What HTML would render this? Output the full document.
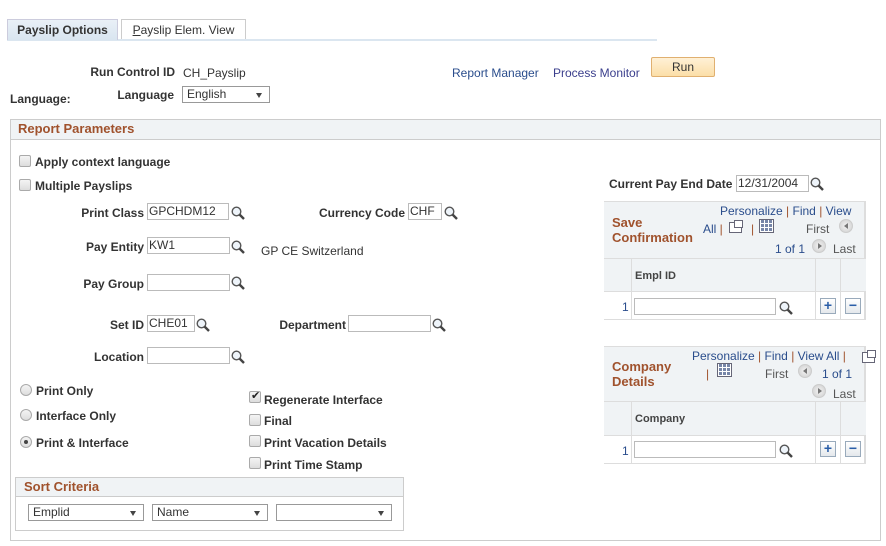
<!DOCTYPE html>
<html><head><meta charset="utf-8"><style>
*{box-sizing:border-box;margin:0;padding:0}
body{width:886px;height:546px;background:#fff;font-family:"Liberation Sans",Arial,sans-serif;font-size:12px;color:#333;position:relative;overflow:hidden}
.a{position:absolute;white-space:nowrap}
.b{font-weight:bold}
.r{text-align:right}
.lnk{color:#2a4d8c}
.h{color:#a0522d;font-weight:bold;font-size:13px}
.in{position:absolute;height:17px;border:1px solid #bbb;background:#fff;font-size:12px;padding-left:1px;line-height:14px;color:#333}
.sel{position:absolute;height:17px;border:1px solid #999;background:#fff;padding-left:4px;line-height:15px}
.sel:after{content:"";position:absolute;right:7px;top:6px;border-left:3px solid transparent;border-right:3px solid transparent;border-top:5px solid #444}
.cb{position:absolute;width:12px;height:12px;border:1px solid #aaa;border-radius:2px;background:linear-gradient(#f4f4f4,#ddd)}
.rd{position:absolute;width:12px;height:12px;border:1px solid #aaa;border-radius:50%;background:linear-gradient(#f4f4f4,#ddd)}
.mag{position:absolute;width:14px;height:14px}
.gb{position:absolute;width:16px;height:16px;border:1px solid #9ab;background:linear-gradient(#fff,#e4e8ec);color:#2a5ea8;font-weight:bold;text-align:center;line-height:13px;font-size:14px}
.nav{position:absolute;width:14px;height:14px;border-radius:50%;background:radial-gradient(#f4f4f4,#ccc);border:1px solid #ccc}
.nav:after{content:"";position:absolute;top:3px;border-top:3px solid transparent;border-bottom:3px solid transparent}
.nl:after{left:4px;border-right:4px solid #777}
.nr:after{left:5px;border-left:4px solid #777}
.gi{position:absolute;width:15px;height:14px;background:repeating-linear-gradient(90deg,#fff 0 1px,transparent 1px 4px),repeating-linear-gradient(0deg,#fff 0 1px,#7786a8 1px 4px);border:1px solid #667}
.ex{position:absolute;width:13px;height:11px;border:1px solid #667;background:#fff}
.ex:after{content:"";position:absolute;left:4px;top:-3px;width:7px;height:6px;border:1px solid #667;background:#fff}
</style></head><body>
<svg width="0" height="0" style="position:absolute"><defs><symbol id="m" viewBox="0 0 14 14"><circle cx="5.5" cy="5.5" r="4.3" fill="#eef4fa" stroke="#555" stroke-width="1.4"/><path d="M8.5 8.5 L13 13" stroke="#444" stroke-width="2.4"/></symbol></defs></svg>

<div class="a" style="left:7px;top:39px;width:650px;height:2px;background:#dbe6f0"></div>
<div class="a b" style="left:7px;top:19px;width:111px;height:21px;background:linear-gradient(#e9f0f7,#d9e5f0);border:1px solid #ccd;border-bottom:none;text-align:center;line-height:20px">Payslip Options</div>
<div class="a" style="left:121px;top:19px;width:125px;height:20px;background:#fff;border:1px solid #ccc;border-bottom:none;text-align:center;line-height:20px"><u>P</u>ayslip Elem. View</div>

<div class="a b r" style="left:60px;top:65px;width:115px">Run Control ID</div>
<div class="a" style="left:183px;top:66px">CH_Payslip</div>
<div class="a b" style="left:10px;top:92px">Language:</div>
<div class="a b r" style="left:60px;top:88px;width:114px">Language</div>
<div class="sel" style="left:182px;top:86px;width:88px">English</div>
<div class="a lnk" style="left:452px;top:66px">Report Manager</div>
<div class="a lnk" style="left:553px;top:66px;color:#3a3e8c">Process Monitor</div>
<div class="a" style="left:651px;top:57px;width:64px;height:20px;border:1px solid #e0b070;border-radius:2px;background:linear-gradient(#fff1d6,#fbdfa8);text-align:center;line-height:18px">Run</div>

<div class="a" style="left:10px;top:119px;width:871px;height:422px;border:1px solid #ccc"></div>
<div class="a" style="left:11px;top:120px;width:869px;height:20px;background:#f0f3f5;border-bottom:1px solid #ccc"></div>
<div class="a h" style="left:18px;top:121px">Report Parameters</div>

<div class="cb" style="left:19px;top:155px"></div><div class="a b" style="left:35px;top:155px">Apply context language</div>
<div class="cb" style="left:19px;top:179px"></div><div class="a b" style="left:35px;top:179px">Multiple Payslips</div>

<div class="a b r" style="left:40px;top:206px;width:104px">Print Class</div>
<div class="in" style="left:147px;top:203px;width:82px">GPCHDM12</div>
<svg class="mag" style="left:231px;top:206px"><use href="#m"/></svg>
<div class="a b r" style="left:280px;top:206px;width:125px">Currency Code</div>
<div class="in" style="left:408px;top:203px;width:34px">CHF</div>
<svg class="mag" style="left:444px;top:206px"><use href="#m"/></svg>

<div class="a b r" style="left:40px;top:240px;width:104px">Pay Entity</div>
<div class="in" style="left:147px;top:237px;width:83px">KW1</div>
<svg class="mag" style="left:231px;top:240px"><use href="#m"/></svg>
<div class="a" style="left:261px;top:244px">GP CE Switzerland</div>

<div class="a b r" style="left:40px;top:277px;width:104px">Pay Group</div>
<div class="in" style="left:147px;top:274px;width:83px"></div>
<svg class="mag" style="left:231px;top:276px"><use href="#m"/></svg>

<div class="a b r" style="left:40px;top:318px;width:104px">Set ID</div>
<div class="in" style="left:147px;top:315px;width:48px">CHE01</div>
<svg class="mag" style="left:196px;top:318px"><use href="#m"/></svg>
<div class="a b r" style="left:240px;top:318px;width:106px">Department</div>
<div class="in" style="left:348px;top:315px;width:83px"></div>
<svg class="mag" style="left:432px;top:318px"><use href="#m"/></svg>

<div class="a b r" style="left:40px;top:350px;width:104px">Location</div>
<div class="in" style="left:147px;top:347px;width:83px"></div>
<svg class="mag" style="left:231px;top:350px"><use href="#m"/></svg>

<div class="rd" style="left:20px;top:384px"></div><div class="a b" style="left:36px;top:384px">Print Only</div>
<div class="rd" style="left:20px;top:409px"></div><div class="a b" style="left:36px;top:409px">Interface Only</div>
<div class="rd" style="left:20px;top:436px"><div style="position:absolute;left:3px;top:3px;width:4px;height:4px;border-radius:50%;background:#444"></div></div><div class="a b" style="left:36px;top:436px">Print &amp; Interface</div>

<div class="cb" style="left:249px;top:391px"><span style="position:absolute;left:1px;top:-3px;font-size:11px;color:#222">✔</span></div><div class="a b" style="left:264px;top:393px">Regenerate Interface</div>
<div class="cb" style="left:249px;top:414px"></div><div class="a b" style="left:264px;top:414px">Final</div>
<div class="cb" style="left:249px;top:435px"></div><div class="a b" style="left:264px;top:436px">Print Vacation Details</div>
<div class="cb" style="left:249px;top:457px"></div><div class="a b" style="left:264px;top:458px">Print Time Stamp</div>

<div class="a" style="left:15px;top:477px;width:389px;height:54px;border:1px solid #ccc"></div>
<div class="a" style="left:16px;top:478px;width:387px;height:19px;background:#f0f3f5;border-bottom:1px solid #ccc"></div>
<div class="a h" style="left:24px;top:479px">Sort Criteria</div>
<div class="sel" style="left:28px;top:504px;width:116px">Emplid</div>
<div class="sel" style="left:152px;top:504px;width:116px">Name</div>
<div class="sel" style="left:276px;top:504px;width:116px"></div>

<div class="a b" style="left:609px;top:177px">Current Pay End Date</div>
<div class="in" style="left:736px;top:175px;width:73px">12/31/2004</div>
<svg class="mag" style="left:810px;top:177px"><use href="#m"/></svg>

<div class="a" style="left:604px;top:201px;width:262px;height:119px;border:1px solid #ddd;border-left:none;border-right:2px solid #ddd"></div>
<div class="a" style="left:604px;top:202px;width:260px;height:57px;background:#f0f3f5;border-bottom:1px solid #ddd"></div>
<div class="a h" style="left:612px;top:215px;line-height:15px">Save<br>Confirmation</div>
<div class="a lnk" style="left:720px;top:204px">Personalize <span style="color:#a0522d">|</span> Find <span style="color:#a0522d">|</span> View</div>
<div class="a lnk" style="left:703px;top:222px">All <span style="color:#a0522d">|</span></div>
<div class="ex" style="left:729px;top:222px"></div>
<div class="a" style="left:751px;top:222px;color:#a0522d">|</div>
<div class="gi" style="left:759px;top:219px"></div>
<div class="a" style="left:806px;top:222px;color:#555">First</div>
<div class="nav nl" style="left:839px;top:219px"></div>
<div class="a lnk" style="left:775px;top:242px">1 of 1</div>
<div class="nav nr" style="left:812px;top:239px"></div>
<div class="a" style="left:833px;top:242px;color:#555">Last</div>
<div class="a" style="left:604px;top:259px;width:262px;height:33px;background:#f0f3f5;border-bottom:1px solid #ddd"></div>
<div class="a" style="left:631px;top:259px;width:1px;height:60px;background:#ddd"></div>
<div class="a" style="left:815px;top:259px;width:1px;height:60px;background:#ddd"></div>
<div class="a" style="left:840px;top:259px;width:1px;height:60px;background:#ddd"></div>
<div class="a b" style="left:635px;top:270px;font-size:11px;color:#444">Empl ID</div>
<div class="a lnk" style="left:622px;top:300px">1</div>
<div class="in" style="left:634px;top:298px;width:142px"></div>
<svg class="mag" style="left:779px;top:301px"><use href="#m"/></svg>
<div class="gb" style="left:820px;top:298px">+</div>
<div class="gb" style="left:845px;top:298px">−</div>

<div class="a" style="left:604px;top:346px;width:262px;height:118px;border:1px solid #ddd;border-left:none;border-right:2px solid #ddd"></div>
<div class="a" style="left:604px;top:347px;width:260px;height:55px;background:#f0f3f5;border-bottom:1px solid #ddd"></div>
<div class="a h" style="left:612px;top:359px;line-height:15px">Company<br>Details</div>
<div class="a lnk" style="left:692px;top:349px">Personalize <span style="color:#a0522d">|</span> Find <span style="color:#a0522d">|</span> View All <span style="color:#a0522d">|</span></div>
<div class="ex" style="left:862px;top:352px"></div>
<div class="a" style="left:706px;top:367px;color:#a0522d">|</div>
<div class="gi" style="left:717px;top:363px"></div>
<div class="a" style="left:765px;top:367px;color:#555">First</div>
<div class="nav nl" style="left:798px;top:364px"></div>
<div class="a lnk" style="left:822px;top:367px">1 of 1</div>
<div class="nav nr" style="left:812px;top:384px"></div>
<div class="a" style="left:833px;top:387px;color:#555">Last</div>
<div class="a" style="left:604px;top:402px;width:262px;height:34px;background:#f0f3f5;border-bottom:1px solid #ddd"></div>
<div class="a" style="left:631px;top:402px;width:1px;height:61px;background:#ddd"></div>
<div class="a" style="left:815px;top:402px;width:1px;height:61px;background:#ddd"></div>
<div class="a" style="left:840px;top:402px;width:1px;height:61px;background:#ddd"></div>
<div class="a b" style="left:635px;top:413px;font-size:11px;color:#444">Company</div>
<div class="a lnk" style="left:622px;top:444px">1</div>
<div class="in" style="left:634px;top:441px;width:142px"></div>
<svg class="mag" style="left:779px;top:444px"><use href="#m"/></svg>
<div class="gb" style="left:820px;top:441px">+</div>
<div class="gb" style="left:845px;top:441px">−</div>
</body></html>
